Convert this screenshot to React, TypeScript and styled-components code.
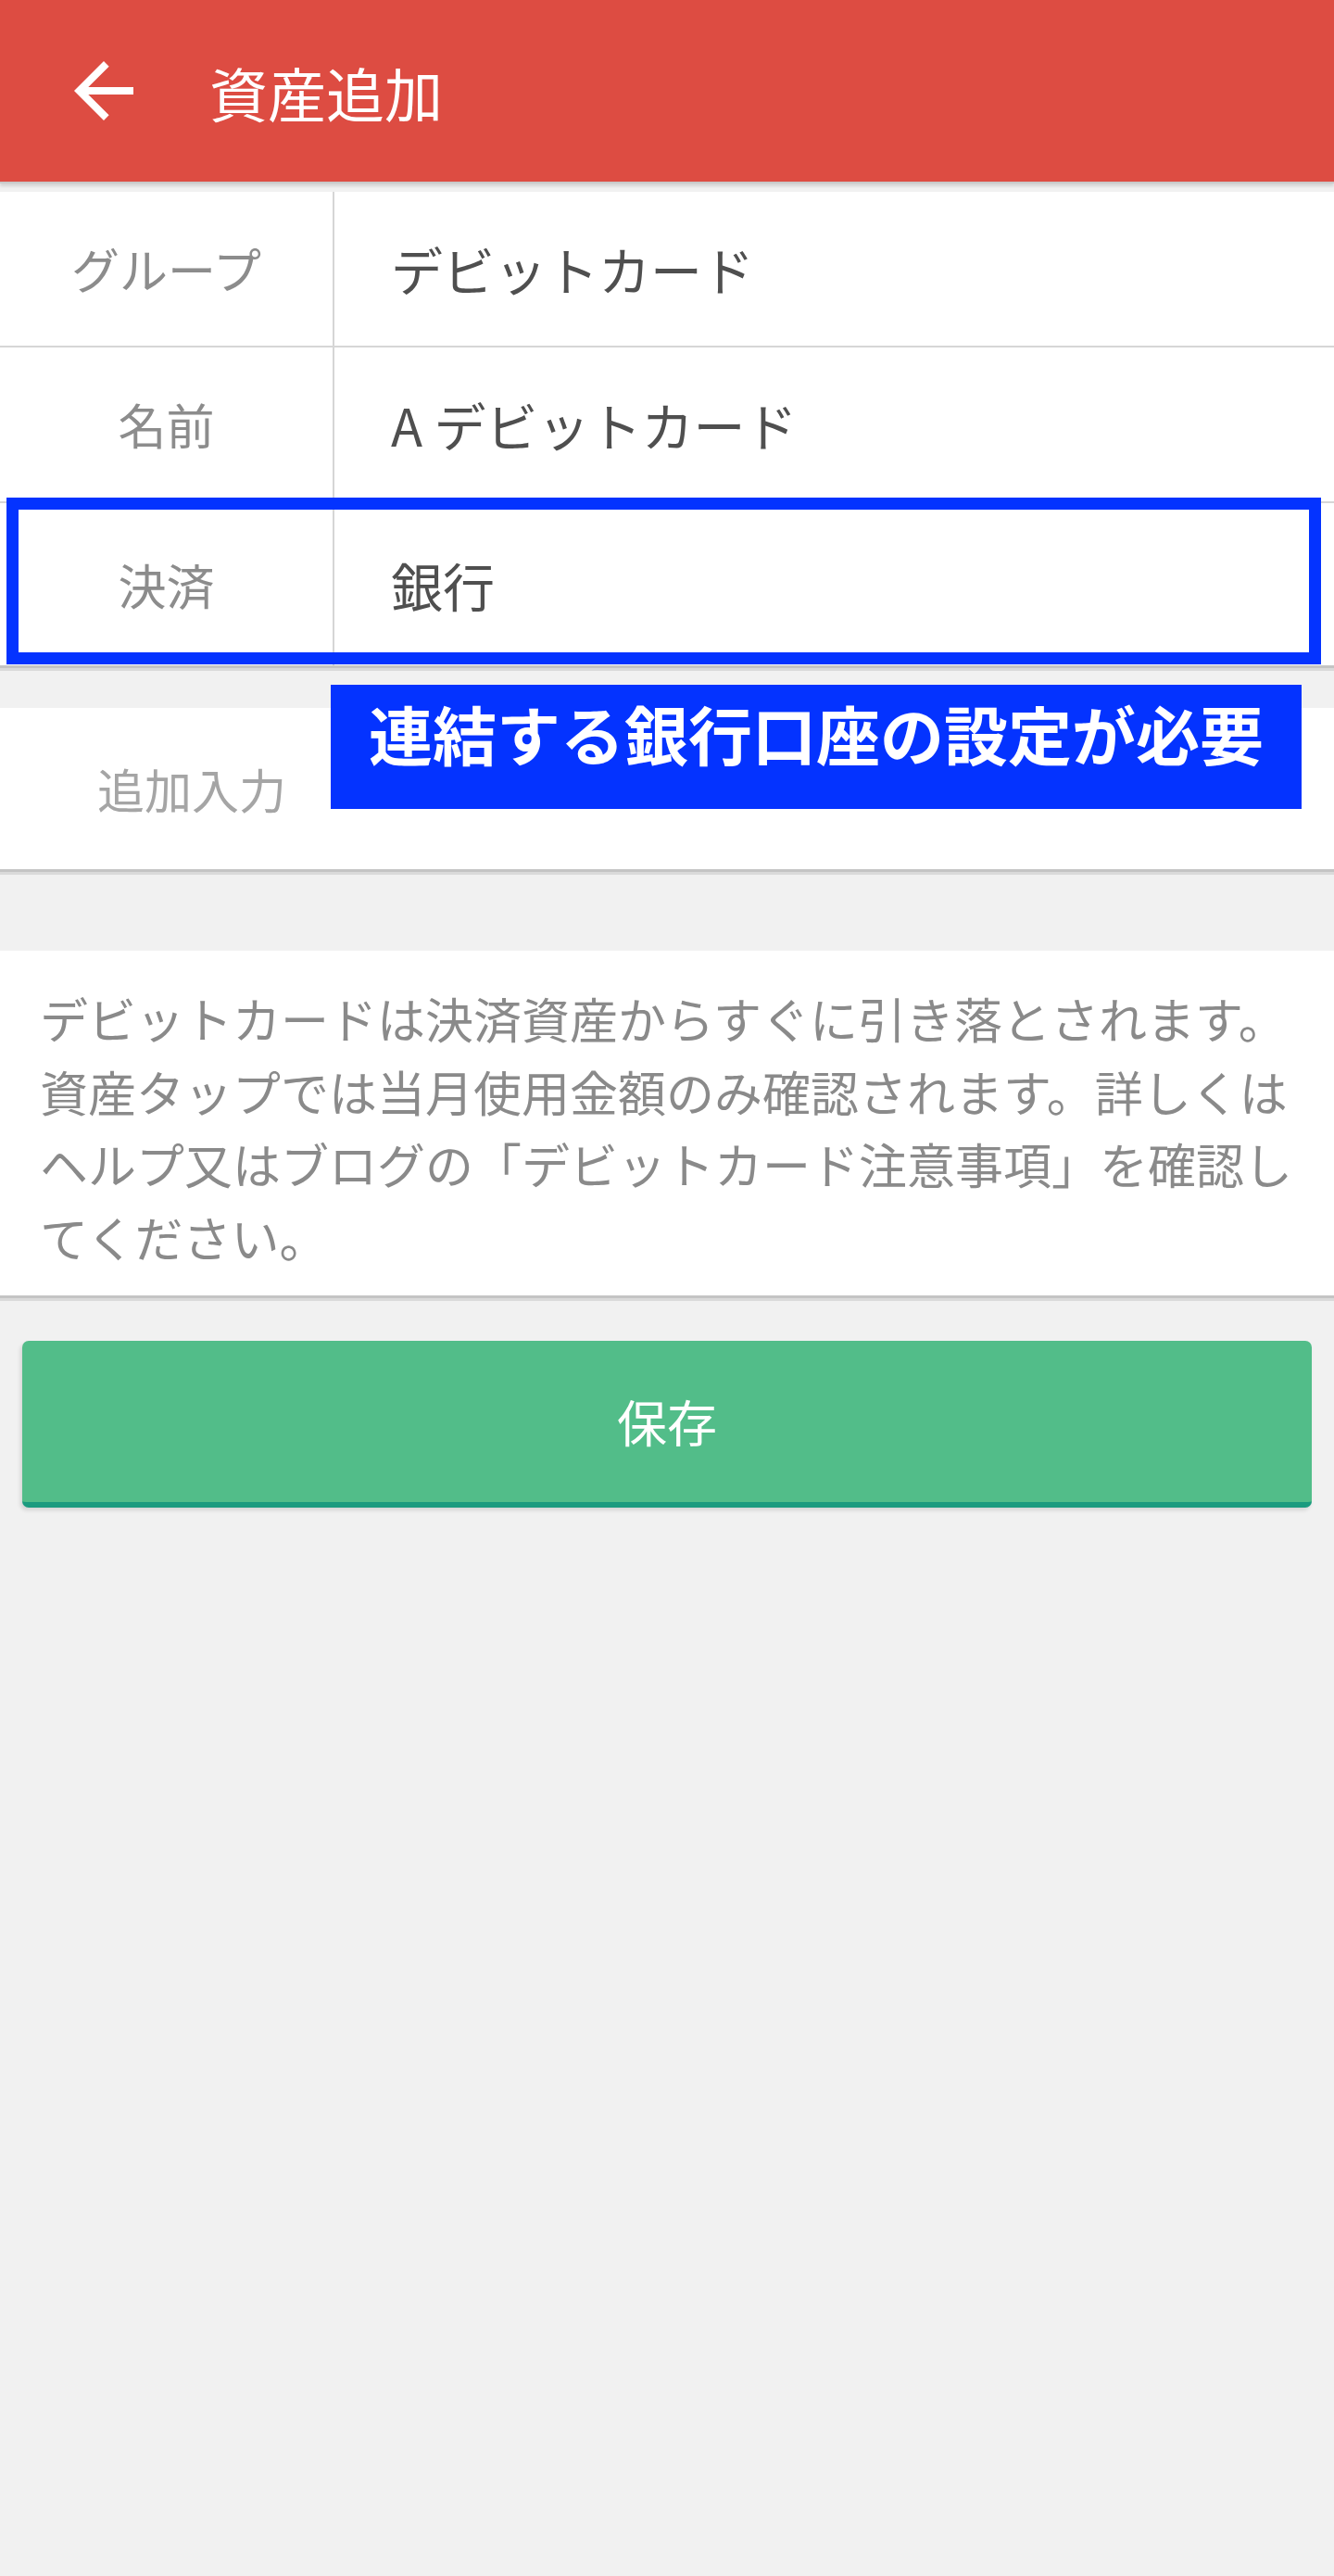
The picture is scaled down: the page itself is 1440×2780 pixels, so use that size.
import React from "react";
import styled, { createGlobalStyle } from "styled-components";

const Global = createGlobalStyle`
  html, body { margin: 0; padding: 0; background: #f1f1f1; }
  body { font-family: "Noto Sans CJK JP", "Noto Sans", sans-serif; }
  * { box-sizing: border-box; }
`;

const Page = styled.div`
  position: relative;
  width: 1440px;
  min-height: 2780px;
  background: #f1f1f1;
`;

const Header = styled.header`
  position: relative;
  z-index: 2;
  height: 196px;
  background: #dd4c42;
  display: flex;
  align-items: center;
  padding-left: 64px;
  gap: 66px;
  box-shadow: 0 2px 0 #c9c9c9, 0 5px 3px rgba(0, 0, 0, 0.12);
`;

const BackButton = styled.button`
  width: 96px;
  height: 96px;
  padding: 0;
  border: none;
  background: transparent;
  display: flex;
  align-items: center;
  justify-content: center;
  svg { display: block; }
`;

const Title = styled.h1`
  margin: 0;
  color: #ffffff;
  font-size: 63px;
  font-weight: 400;
  line-height: 1;
`;

const Main = styled.main`
  padding-top: 11px;
  display: flex;
  flex-direction: column;
`;

const Card = styled.section<{ $gap?: number }>`
  position: relative;
  background: #ffffff;
  margin-top: ${(p) => p.$gap ?? 0}px;
  box-shadow: 0 3px 0 #c4c4c4, 0 6px 0 #dadada;
`;

const Row = styled.div<{ $h: number; $last?: boolean }>`
  position: relative;
  display: grid;
  grid-template-columns: 361px 1fr;
  height: ${(p) => p.$h}px;
  border-bottom: ${(p) => (p.$last ? "none" : "2px solid #d6d6d6")};
`;

const Label = styled.div`
  display: flex;
  align-items: center;
  justify-content: center;
  border-right: 2px solid #d6d6d6;
  color: #8c8c8c;
  font-size: 52px;
  line-height: 1;
`;

const Value = styled.div`
  display: flex;
  align-items: center;
  padding-left: 61px;
  color: #4f4f4f;
  font-size: 56px;
  line-height: 1;
`;

const Highlight = styled.div`
  position: absolute;
  left: 7px;
  top: -6px;
  width: 1419px;
  height: 180px;
  border: 13px solid #0433ff;
  pointer-events: none;
`;

const ExtraRow = styled.div`
  height: 174px;
  display: flex;
  align-items: center;
  padding-left: 105px;
  color: #a5a5a5;
  font-size: 51px;
  line-height: 1;
`;

const Note = styled.p`
  margin: 0;
  padding: 34px 38px 24px 43px;
  color: #8a8a8a;
  font-size: 52px;
  line-height: 78.5px;
`;

const SaveButton = styled.button`
  margin: 49px 24px 0 24px;
  height: 180px;
  border: none;
  border-bottom: 6px solid #1b9b7f;
  border-radius: 7px;
  background: #52bd89;
  color: #ffffff;
  font-family: "Noto Sans CJK JP", "Noto Sans", sans-serif;
  font-size: 54px;
  line-height: 1;
  box-shadow: -2px 3px 4px rgba(0, 0, 0, 0.12);
`;

const Callout = styled.div`
  position: absolute;
  z-index: 3;
  left: 357px;
  top: 739px;
  width: 1048px;
  height: 134px;
  background: #0433ff;
  color: #ffffff;
  display: flex;
  justify-content: center;
  padding-top: 11px;
  font-size: 69px;
  font-weight: 700;
  line-height: 1.2;
  white-space: nowrap;
`;

const ArrowBack = () => (
  <svg width="96" height="96" viewBox="0 0 24 24" fill="#ffffff">
    <path d="M20 11H7.83l5.59-5.59L12 4l-8 8 8 8 1.41-1.41L7.83 13H20v-2z" />
  </svg>
);

const rows = [
  { label: "グループ", value: "デビットカード", h: 168 },
  { label: "名前", value: "A デビットカード", h: 168 },
  { label: "決済", value: "銀行", h: 175, last: true },
];

export default function App() {
  return (
    <Page>
      <Global />
      <Header>
        <BackButton aria-label="戻る">
          <ArrowBack />
        </BackButton>
        <Title>資産追加</Title>
      </Header>
      <Main>
        <Card>
          {rows.map((r) => (
            <Row key={r.label} $h={r.h} $last={r.last}>
              <Label>{r.label}</Label>
              <Value>{r.value}</Value>
              {r.last && <Highlight />}
            </Row>
          ))}
        </Card>
        <Card $gap={46}>
          <ExtraRow>追加入力</ExtraRow>
        </Card>
        <Card $gap={88}>
          <Note>
            デビットカードは決済資産からすぐに引き落とされます。資産タップでは当月使用金額のみ確認されます。詳しくはヘルプ又はブログの「デビットカード注意事項」を確認してください。
          </Note>
        </Card>
        <SaveButton>保存</SaveButton>
      </Main>
      <Callout>連結する銀行口座の設定が必要</Callout>
    </Page>
  );
}
